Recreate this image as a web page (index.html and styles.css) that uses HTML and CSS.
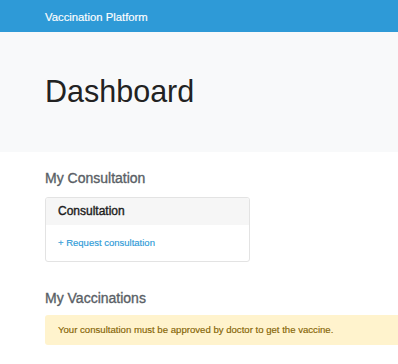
FILE: index.html
```html
<!DOCTYPE html>
<html lang="en">
<head>
<meta charset="utf-8">
<title>Dashboard - Vaccination Platform</title>
<link rel="stylesheet" href="styles.css">
</head>
<body>
<nav class="navbar">
  <div class="container">
    <span class="brand">Vaccination Platform</span>
  </div>
</nav>
<header class="jumbotron">
  <div class="container">
    <h1 class="display">Dashboard</h1>
  </div>
</header>
<main class="container">
  <section class="section">
    <h2 class="section-title">My Consultation</h2>
    <div class="card">
      <div class="card-header">Consultation</div>
      <div class="card-body">
        <a class="link" href="#">+ Request consultation</a>
      </div>
    </div>
  </section>
  <section class="section section-vacc">
    <h2 class="section-title">My Vaccinations</h2>
    <div class="alert">Your consultation must be approved by doctor to get the vaccine.</div>
  </section>
</main>
</body>
</html>
```
FILE: styles.css
```css
html, body {
  margin: 0;
  padding: 0;
  overflow: hidden;
}
body {
  font-family: "Liberation Sans", Arial, sans-serif;
  color: #212529;
  background: #ffffff;
}
.container {
  padding-left: 45px;
  width: 353px;
}
.navbar {
  background: #2e9ad7;
  height: 32px;
  display: flex;
  align-items: center;
}
.brand {
  color: #ffffff;
  font-size: 11.3px;
  line-height: 14px;
  display: block;
  padding-top: 1px;
  -webkit-text-stroke: 0.15px #ffffff;
}
.jumbotron {
  background: #f8f9fa;
  padding: 41px 0 42px;
}
.display {
  margin: 0;
  font-size: 30.5px;
  line-height: 37px;
  font-weight: 300;
  color: #222;
}
.section {
  padding-top: 18px;
}
.section-vacc {
  padding-top: 28px;
}
.section-title {
  margin: 0 0 10px;
  font-size: 14px;
  line-height: 17px;
  font-weight: 400;
  color: #5a5f66;
  -webkit-text-stroke: 0.35px #5a5f66;
}
.section-vacc .section-title {
  margin-bottom: 8px;
}
.card {
  width: 203px;
  border: 1px solid #e3e3e3;
  border-radius: 3px;
  overflow: hidden;
}
.card-header {
  background: #f6f6f6;
  padding: 6px 12px 7px;
  font-size: 12px;
  line-height: 14px;
  font-weight: 400;
  color: #1e1e1e;
  -webkit-text-stroke: 0.4px #1e1e1e;
}
.card-body {
  padding: 11px 12px 11px;
  font-size: 9.5px;
  line-height: 14px;
}
.link {
  color: #2e9ad7;
  text-decoration: none;
  -webkit-text-stroke: 0.15px #2e9ad7;
}
.alert {
  background: #fff3cd;
  color: #856404;
  font-size: 9.6px;
  line-height: 14px;
  padding: 8px 13px;
  border-radius: 3px 0 0 3px;
  -webkit-text-stroke: 0.15px #856404;
}
```
